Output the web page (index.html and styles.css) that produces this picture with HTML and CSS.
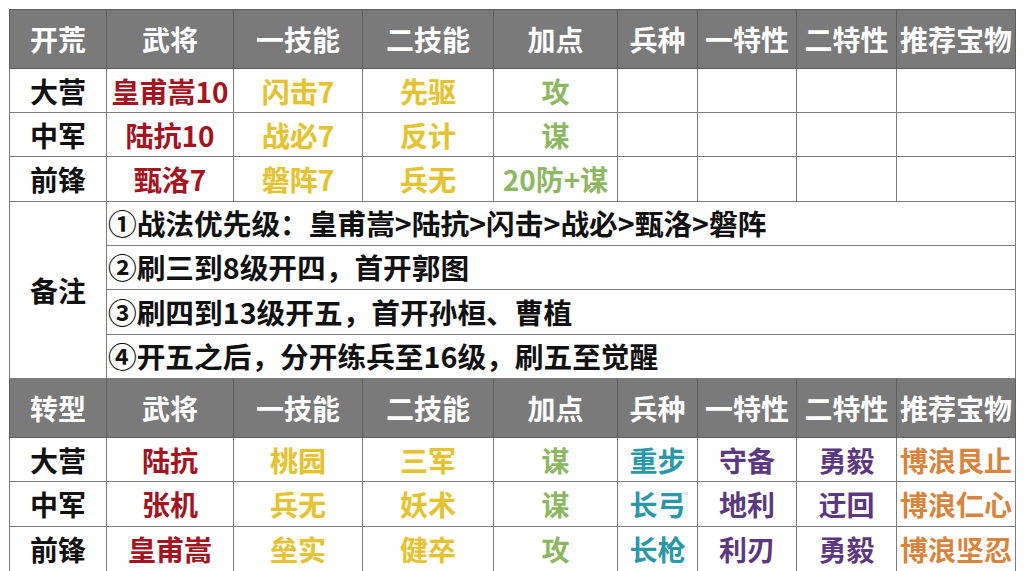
FILE: index.html
```html
<!DOCTYPE html>
<html lang="zh">
<head>
<meta charset="utf-8">
<title>阵容表</title>
<link rel="stylesheet" href="styles.css">
</head>
<body>
<table class="grid">
  <colgroup>
    <col class="c1"><col class="c2"><col class="c3"><col class="c4"><col class="c5"><col class="c6"><col class="c7"><col class="c8"><col class="c9">
  </colgroup>
  <tr class="head">
    <th>开荒</th><th>武将</th><th>一技能</th><th>二技能</th><th>加点</th><th>兵种</th><th>一特性</th><th>二特性</th><th>推荐宝物</th>
  </tr>
  <tr class="row">
    <td>大营</td><td class="red">皇甫嵩10</td><td class="yel">闪击7</td><td class="yel">先驱</td><td class="grn">攻</td><td></td><td></td><td></td><td></td>
  </tr>
  <tr class="row">
    <td>中军</td><td class="red">陆抗10</td><td class="yel">战必7</td><td class="yel">反计</td><td class="grn">谋</td><td></td><td></td><td></td><td></td>
  </tr>
  <tr class="row r3">
    <td>前锋</td><td class="red">甄洛7</td><td class="yel">磐阵7</td><td class="yel">兵无</td><td class="grn">20防+谋</td><td></td><td></td><td></td><td></td>
  </tr>
  <tr class="note">
    <td rowspan="4">备注</td><td class="txt" colspan="8">①战法优先级：皇甫嵩&gt;陆抗&gt;闪击&gt;战必&gt;甄洛&gt;磐阵</td>
  </tr>
  <tr class="note">
    <td class="txt" colspan="8">②刷三到8级开四，首开郭图</td>
  </tr>
  <tr class="note n3">
    <td class="txt" colspan="8">③刷四到13级开五，首开孙桓、曹植</td>
  </tr>
  <tr class="note">
    <td class="txt" colspan="8">④开五之后，分开练兵至16级，刷五至觉醒</td>
  </tr>
  <tr class="head">
    <th>转型</th><th>武将</th><th>一技能</th><th>二技能</th><th>加点</th><th>兵种</th><th>一特性</th><th>二特性</th><th>推荐宝物</th>
  </tr>
  <tr class="row">
    <td>大营</td><td class="red">陆抗</td><td class="yel">桃园</td><td class="yel">三军</td><td class="grn">谋</td><td class="teal">重步</td><td class="pur">守备</td><td class="pur">勇毅</td><td class="org">博浪艮止</td>
  </tr>
  <tr class="row r3">
    <td>中军</td><td class="red">张机</td><td class="yel">兵无</td><td class="yel">妖术</td><td class="grn">谋</td><td class="teal">长弓</td><td class="pur">地利</td><td class="pur">迂回</td><td class="org">博浪仁心</td>
  </tr>
  <tr class="row r3">
    <td>前锋</td><td class="red">皇甫嵩</td><td class="yel">垒实</td><td class="yel">健卒</td><td class="grn">攻</td><td class="teal">长枪</td><td class="pur">利刃</td><td class="pur">勇毅</td><td class="org">博浪坚忍</td>
  </tr>
</table>
</body>
</html>
```

FILE: styles.css
```css
html, body {
  background: #ffffff;
}
body {
  margin: 9px 0 0 9px;
  font-family: "Noto Sans CJK SC", "Noto Sans", sans-serif;
  overflow: hidden;
}
.grid {
  border-collapse: collapse;
  table-layout: fixed;
  width: 1006px;
}
.c1 { width: 97px; }
.c2 { width: 127px; }
.c3 { width: 129px; }
.c4 { width: 131px; }
.c5 { width: 124px; }
.c6 { width: 80px; }
.c7 { width: 99px; }
.c8 { width: 100px; }
.c9 { width: 119px; }
.grid th, .grid td {
  border: 1px solid #7c7c7c;
  padding: 0;
  text-align: center;
  vertical-align: middle;
  white-space: nowrap;
  overflow: hidden;
  font-size: 28px;
  line-height: 1;
}
.head th {
  height: 58px;
  background: #7a7a7a;
  color: #ffffff;
  font-weight: 700;
  border-color: #5e5e5e;
}
.row td {
  height: 43px;
  color: #111111;
  font-weight: 700;
}
.row.r3 td { height: 44px; }
.note td {
  height: 43px;
  color: #111111;
  font-weight: 700;
}
.note.n3 td { height: 44px; }
.note td.txt {
  text-align: left;
  padding-left: 1px;
  font-size: 28.7px;
}
.red { color: #a3141f !important; }
.yel { color: #e3c233 !important; text-shadow: 0 0 2px #fbeec0; }
.grn { color: #8cb862 !important; }
.teal { color: #2b98aa !important; }
.pur { color: #5c3880 !important; }
.org { color: #d9843c !important; }
```
